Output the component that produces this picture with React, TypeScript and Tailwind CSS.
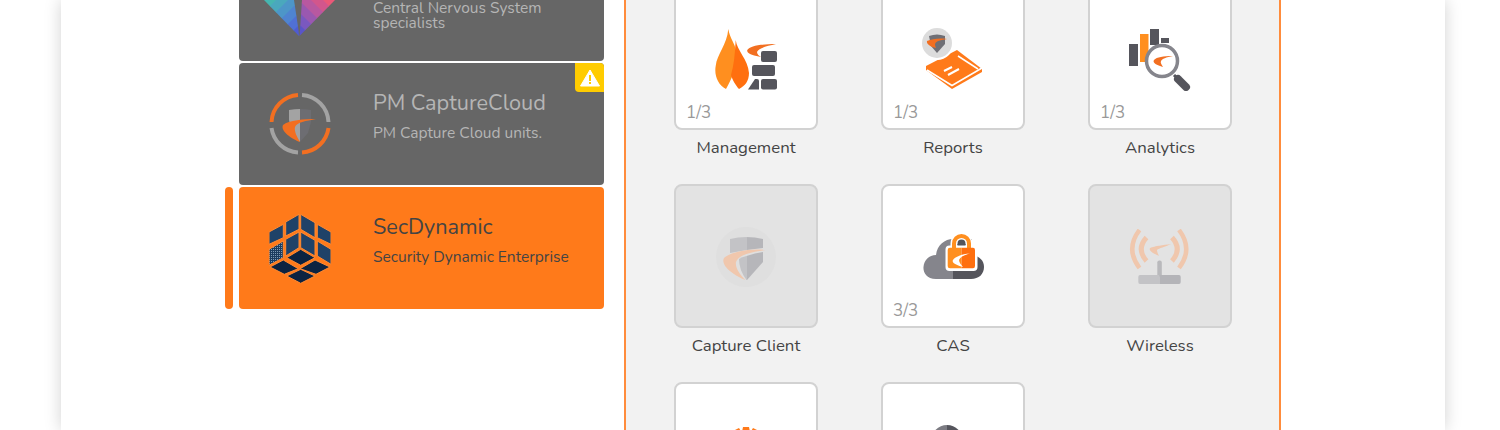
import { ReactNode } from "react";

const CaptureLogo = () => (
  <svg width="64" height="64" viewBox="0 0 64 64" fill="none">
    <g strokeWidth="4" strokeLinecap="butt">
      <path d="M30 3A28.500 28.500 0 0 0 3.500 30" stroke="#f26f21" />
      <path d="M34 3A28.500 28.500 0 0 1 60.500 30" stroke="#a3a3a3" />
      <path d="M3.500 36A28.500 28.500 0 0 0 30 60.500" stroke="#a3a3a3" />
      <path d="M60.500 36A28.500 28.500 0 0 1 34 60.500" stroke="#f26f21" />
    </g>
    <path d="M21 18Q27 17 32 17V50L24 41 21 28Z" fill="#a3a3a3" />
    <path d="M32 17Q38 17 43 18V30L40 41 32 50Z" fill="#6d6d72" />
    <path d="M15 33C21 28 36 27 48 27 38 29 29 30 27 35 26 39 29 45 32 50 24 47 12 39 15 33Z" fill="#f26f21" />
  </svg>
);

const CubeLogo = () => {
  const face = "#1f4268";
  const dark = "#0c2341";
  return (
    <svg width="62" height="71" viewBox="0 0 62 71" stroke="#ff8a33" strokeWidth="1">
      <defs>
        <pattern id="dots" width="2" height="2" patternUnits="userSpaceOnUse">
          <rect width="2" height="2" fill="#1c3c5e" stroke="none" />
          <rect width="1" height="1" fill="#7d9ab5" stroke="none" />
        </pattern>
      </defs>
      <path d="M0 19 14.300 11.300V24.700L0 31.300Z" fill={face} />
      <path d="M16.700 9 30 1.300V16.300L16.700 23Z" fill={face} />
      <path d="M31.700 1.300 46 9.700V24.700L31.700 16.300Z" fill={face} />
      <path d="M48.300 11.300 62 19V31.300L48.300 24.700Z" fill={face} />
      <path d="M16.700 26.300 30 19V34.700L16.700 43Z" fill={face} />
      <path d="M31.700 19 46 27.300V43L31.700 34.700Z" fill={face} />
      <path d="M48.300 28 62 36.300V51.300L48.300 43Z" fill={face} />
      <path d="M0 36.300 14.300 28V44.700L0 52.300Z" fill="url(#dots)" />
      <path d="M17.700 44.700 31.700 36.300 46 44.700 31.700 52.300Z" fill={dark} />
      <path d="M1 54 14.300 47 29.300 55.700 15.300 61.300Z" fill={dark} />
      <path d="M31 55.700 46 47 61 54 47 61.300Z" fill={dark} />
      <path d="M17.700 63 31.700 56.300 46 63 31.700 70.300Z" fill={dark} />
    </svg>
  );
};

const leftBands = ["#46b6b0", "#4aa8bd", "#4d96c8", "#4f84d0", "#5070d4", "#4f5bd2"];
const rightBands = ["#ea5878", "#d2568c", "#b858a0", "#9a58b0", "#7a58bf", "#5a55c8"];

const TriangleLogo = () => (
  <svg width="72" height="36" viewBox="0 0 72 36">
    <defs>
      <clipPath id="wingL">
        <path d="M0 0H30L34.500 30 35 36Z" />
      </clipPath>
      <clipPath id="wingR">
        <path d="M38 0H71L35.500 36 36 30Z" />
      </clipPath>
    </defs>
    <g clipPath="url(#wingL)">
      {leftBands.map((c, i) => {
        const a = i * 12;
        const b = a + 13;
        return <path key={c} d={`M${a} 0H${b}L${b - 40} 40H${a - 40}Z`} fill={c} />;
      })}
    </g>
    <g clipPath="url(#wingR)">
      {rightBands.map((c, i) => {
        const a = 71 - i * 12;
        const b = a - 13;
        return <path key={c} d={`M${a} 0H${b}L${b + 40} 40H${a + 40}Z`} fill={c} />;
      })}
    </g>
  </svg>
);

const FlameWall = () => (
  <svg width="62" height="62" viewBox="0 0 62 62">
    <path d="M13.300 0C15 10 20 14 21 22 23 36 17 50 11 60 3 56-1 46 .7 37 2 25 12 16 13.300 0Z" fill="#ff8f1f" />
    <path d="M20.700 11C22 22 33 30 34 44 34 52 30 57 24 60 21 57 17 50 16 46 19 36 20 24 20.700 11Z" fill="#ff6f0f" />
    <path d="M32.300 21C35 17 45 15 61 15 52 17 44 19 42 23 42 25 44 27 46 28 40 27 31 25 32.300 21Z" fill="#f26f21" />
    <rect x="46" y="22" width="16" height="11" rx="2" fill="#55555c" />
    <rect x="37" y="36" width="23" height="11" rx="2" fill="#55555c" />
    <rect x="46" y="50" width="16" height="10.500" rx="2" fill="#55555c" />
    <path d="M33 60.500 40 50H42Q44 50 44 52V60.500Z" fill="#55555c" />
  </svg>
);

const ReportsIcon = () => (
  <svg width="62" height="62" viewBox="0 0 62 62">
    <path d="M4 38 35 22 60 41V44L30 61 4 42Z" fill="#ff7a1a" />
    <path d="M5 42 30 57.500 60 40" stroke="#fff" strokeWidth="1.500" fill="none" />
    <path d="M36 28 56 41" stroke="#fff" strokeWidth="1.500" />
    <path d="M22 43 30 39M26 47 37 41" stroke="#fff" strokeWidth="2" />
    <circle cx="15" cy="15" r="17" fill="#fff" />
    <circle cx="15" cy="15" r="15" fill="#dcdcdc" />
    <path d="M7 8Q15 5 23 8V16L15 25 9 18Z" fill="#6f6f75" />
    <path d="M5 13C10 11 17 10 25 11 19 12 14 13 13 16 13 18 14 20 14 20 9 19 4 16 5 13Z" fill="#f26f21" />
  </svg>
);

const AnalyticsIcon = () => (
  <svg width="62" height="62" viewBox="0 0 62 62">
    <rect x="0" y="15" width="9" height="22" fill="#55555c" />
    <rect x="11" y="5" width="8.500" height="28" fill="#ff8f1f" />
    <rect x="21" y="0" width="9" height="16" fill="#55555c" />
    <rect x="32" y="9" width="8" height="5" fill="#55555c" />
    <circle cx="33" cy="32" r="15.500" fill="#fff" stroke="#85858c" strokeWidth="3.500" />
    <path d="M25 31C28 28 34 27 44 27 37 28 33 30 32 32 31 34 33 36 34 38 28 36 23 34 25 31Z" fill="#f26f21" />
    <path d="M45 46 48 49" stroke="#55555c" strokeWidth="3" />
    <path d="M49 50 57 58" stroke="#55555c" strokeWidth="8" strokeLinecap="round" />
  </svg>
);

const ShieldBadge = () => (
  <svg width="62" height="62" viewBox="0 0 62 62">
    <circle cx="31" cy="31" r="30" fill="#dfdfdf" />
    <path d="M15 13Q23 11 31.500 11V24L15 27Z" fill="#c3c3c6" />
    <path d="M31.500 11Q40 11 48 13V22L31.500 24Z" fill="#b6b6ba" />
    <path d="M24 33Q27 31 31.500 30V54Q24 44 24 33Z" fill="#c3c3c6" />
    <path d="M31.500 30Q40 27 48 26V36L32 54H31.500Z" fill="#b6b6ba" />
    <path d="M9 32C14 27 32 22 50.500 24 38 26 24 28 21 36 20 42 25 49 30.500 54 20 50 5 40 9 32Z" fill="#f0c7ad" />
  </svg>
);

const CloudLock = () => (
  <svg width="62" height="48" viewBox="0 0 62 48">
    <path d="M31 47H14C4 47 1 40 1.500 35 2 28 7 23 14 23 15 13 23 7 31 7Z" fill="#85858c" />
    <path d="M31 47V7H50V23C58 24 62 29 62 35 62 42 57 47 49 47Z" fill="#55555c" />
    <rect x="23.500" y="13.500" width="32" height="25.500" rx="4" fill="#fff" />
    <path d="M32 17V11.500A7.500 7.500 0 0 1 47 11.500V17" stroke="#fff" strokeWidth="7" fill="none" />
    <path d="M32 17V11.500A7.500 7.500 0 0 1 47 11.500V17" stroke="#ff8f1f" strokeWidth="4" fill="none" />
    <path d="M35 13Q39.500 6 44 13Z" fill="#55555c" />
    <path d="M28 15.700H39.500V36.300H28Q25.700 36.300 25.700 34V18Q25.700 15.700 28 15.700Z" fill="#ff8f1f" />
    <path d="M39.500 15.700H51Q53 15.700 53 18V34Q53 36.300 51 36.300H39.500Z" fill="#ff6f0f" />
    <path d="M31 28C34 24 41 22 48 21.500 42 23 38 25 37 28 37 30 39 33 41 35 36 34 29 31 31 28Z" fill="#fff" />
  </svg>
);

const WirelessIcon = () => (
  <svg width="62" height="56" viewBox="0 0 62 56" fill="none">
    <path d="M10.500 1Q-4 20 10.500 39" stroke="#f0c7ad" strokeWidth="4.500" />
    <path d="M50 1Q64.500 20 50 39" stroke="#f0c7ad" strokeWidth="4.500" />
    <path d="M17.500 8.500Q7 20 17.500 32" stroke="#f0c7ad" strokeWidth="5" />
    <path d="M43 8.500Q53.500 20 43 32" stroke="#f0c7ad" strokeWidth="5" />
    <path d="M21 19C26 17 34 16 42 15 36 18 30 19 28 21 28 23 29 25 30 27 26 25 19 22 21 19Z" fill="#f0c7ad" />
    <rect x="28.300" y="31.500" width="4.500" height="16" rx="2" fill="#b9b9bc" />
    <path d="M11 46H30.500V55H11Q9.300 55 9.300 53V48Q9.300 46 11 46Z" fill="#c3c3c6" />
    <path d="M30.500 46H50Q51.700 46 51.700 48V53Q51.700 55 50 55H30.500Z" fill="#b4b4b8" />
  </svg>
);

const GearIcon = () => (
  <svg width="62" height="24" viewBox="0 0 62 24">
    <circle cx="31" cy="14" r="10" fill="#ff7a1a" />
    <path d="M28 0H34L35 5H27ZM20 3 24 1 27 6 23 8ZM42 3 38 1 35 6 39 8ZM17 8 20 6 23 10 20 13ZM45 8 42 6 39 10 42 13Z" fill="#ff7a1a" />
  </svg>
);

const GlobeIcon = () => (
  <svg width="62" height="16" viewBox="0 0 62 16">
    <path d="M25 0A16 16 0 0 0 9 16H25Z" fill="#7c7c83" />
    <path d="M25 0A16 16 0 0 1 41 16H25Z" fill="#55555c" />
  </svg>
);

function Product({ name, desc, logo, tone, badge, sub }: { name?: string; desc: string; logo: ReactNode; tone: "gray" | "orange"; badge?: boolean; sub?: boolean }) {
  const on = tone === "orange";
  return (
    <div className="relative flex items-stretch">
      {on && <div className="absolute left-[-14px] top-0 h-full w-2 rounded bg-[#ff7a1a]" />}
      <div className={`relative flex h-[122px] w-[365px] rounded ${on ? "bg-[#ff7a1a] text-[#444]" : "bg-[#666] text-[#b5b5b5]"}`}>
        <div className={`flex w-[122px] shrink-0 justify-center ${sub ? "items-end pb-[25px]" : "items-center"}`}>{logo}</div>
        <div className={`min-w-0 flex-1 pl-[12px] ${sub ? "pt-[61px]" : "pt-[27px]"}`}>
          {name && <div className="text-[21.7px] leading-[26px]">{name}</div>}
          <div className={sub ? "w-[190px] text-[15.5px] leading-[15px]" : "mt-[7px] text-[15.5px] leading-[20px]"}>{desc}</div>
        </div>
        {badge && (
          <div className="absolute right-0 top-0 flex h-[29px] w-[29px] items-center justify-center rounded-bl rounded-tr bg-[#ffcc00]">
            <svg width="20" height="18" viewBox="0 0 20 18">
              <path d="M10 1 19.500 17H.5Z" fill="#fff" stroke="#fff" strokeLinejoin="round" />
              <rect x="9" y="6" width="2" height="6" fill="#ffcc00" />
              <rect x="9" y="13" width="2" height="2" fill="#ffcc00" />
            </svg>
          </div>
        )}
      </div>
    </div>
  );
}

function Tile({ label, count, icon, off, iconClass }: { label?: string; count?: string; icon?: ReactNode; off?: boolean; iconClass: string }) {
  return (
    <div className="w-[144px]">
      <div className={`relative flex h-[144px] justify-center rounded-lg border-2 border-[#d2d2d2] ${off ? "bg-[#e3e3e3]" : "bg-white"} ${iconClass}`}>
        {icon}
        {count && <span className="absolute bottom-[4px] left-[10px] text-[17px] leading-[22px] text-[#999]">{count}</span>}
      </div>
      {label && <div className="mt-[7px] text-center text-[16.8px] leading-[22px] text-[#444]">{label}</div>}
    </div>
  );
}

export default function App() {
  return (
    <div className="h-[430px] overflow-hidden bg-white font-['Nunito','Lato','Noto_Sans',sans-serif]">
      <div className="mx-[61px] flex h-full w-[1384px] bg-white shadow-[0_0_16px_rgba(0,0,0,0.18)]">
        <div className="ml-[178px] mt-[-61px] flex w-[365px] flex-col gap-[2px]">
          <Product sub desc="Central Nervous System specialists" tone="gray" logo={<TriangleLogo />} />
          <Product name="PM CaptureCloud" desc="PM Capture Cloud units." tone="gray" badge logo={<CaptureLogo />} />
          <Product name="SecDynamic" desc="Security Dynamic Enterprise" tone="orange" logo={<CubeLogo />} />
        </div>
        <div className="ml-[20px] h-full w-[657px] overflow-hidden border-x-2 border-[#ff8c3c] bg-[#f2f2f2] pl-[48px]">
          <div className="mt-[-14px] grid w-[558px] grid-cols-[144px_144px_144px] gap-x-[63px] gap-y-[25px]">
            <Tile label="Management" count="1/3" iconClass="pt-[41px]" icon={<FlameWall />} />
            <Tile label="Reports" count="1/3" iconClass="pt-[40px]" icon={<ReportsIcon />} />
            <Tile label="Analytics" count="1/3" iconClass="pt-[41px]" icon={<AnalyticsIcon />} />
            <Tile label="Capture Client" off iconClass="pt-[40px]" icon={<ShieldBadge />} />
            <Tile label="CAS" count="3/3" iconClass="pt-[46px]" icon={<CloudLock />} />
            <Tile label="Wireless" off iconClass="pt-[43px]" icon={<WirelessIcon />} />
            <Tile iconClass="pt-[43px]" icon={<GearIcon />} />
            <Tile iconClass="pt-[41px]" icon={<GlobeIcon />} />
          </div>
        </div>
      </div>
    </div>
  );
}
